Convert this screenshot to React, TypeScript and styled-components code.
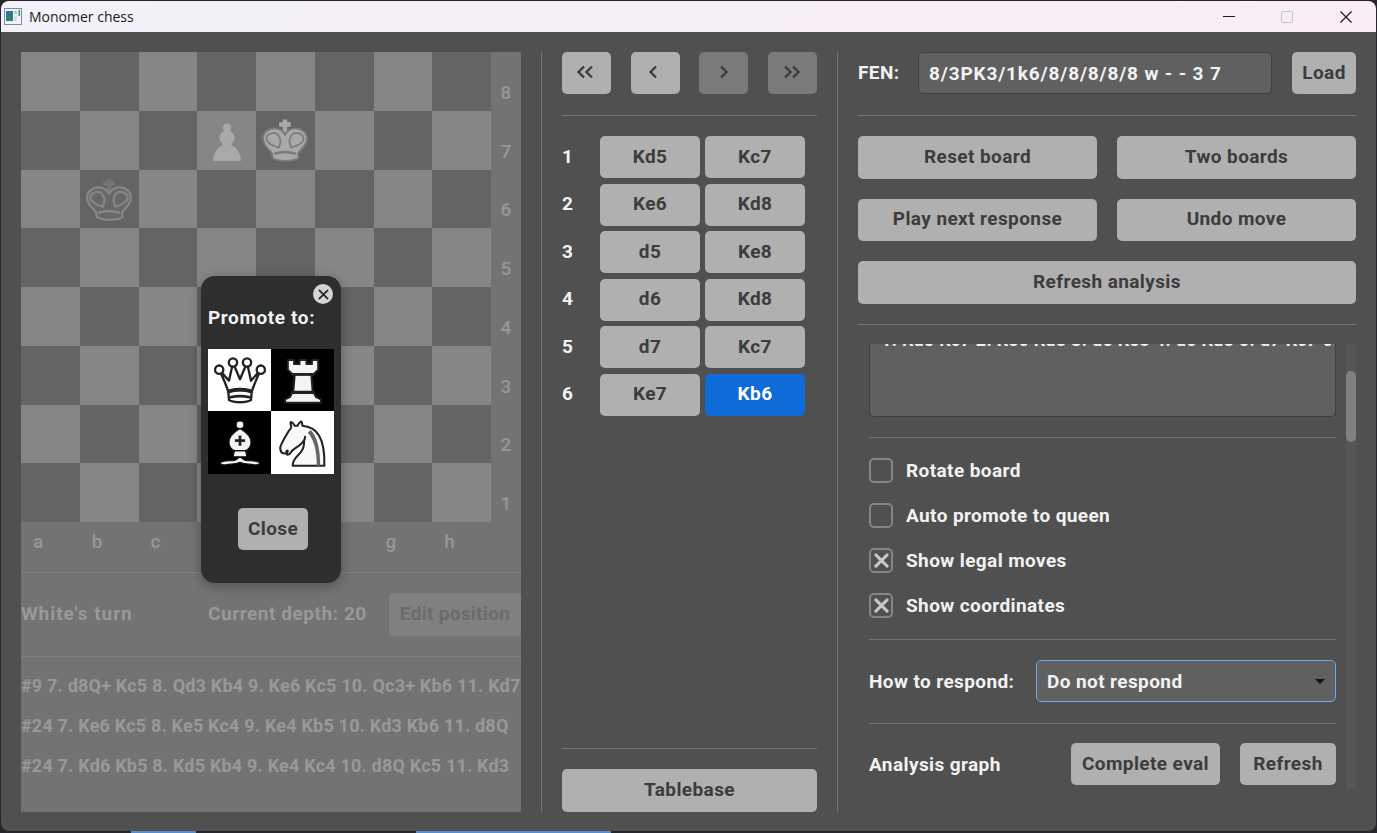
// App.tsx
import { Fragment } from "react";
import styled, { createGlobalStyle } from "styled-components";

const GlobalStyle = createGlobalStyle`
  html, body {
    margin: 0;
    padding: 0;
    width: 100%;
    height: 100%;
    overflow: hidden;
    background: #24252d;
  }
  * {
    box-sizing: border-box;
  }
`;

const FONT = `Roboto, "Noto Sans", sans-serif`;

const Desktop = styled.div`
  width: 1377px;
  height: 833px;
  padding: 1px 1px 0 1px;
  display: flex;
  flex-direction: column;
  background: #24252d;
`;

const Window = styled.div`
  width: 1375px;
  height: 830px;
  display: flex;
  flex-direction: column;
  border-radius: 8px;
  overflow: hidden;
  background: #505050;
`;

const TaskStrip = styled.div`
  height: 2px;
  display: flex;
  padding-left: 130px;
  gap: 220px;
`;

const TaskMark = styled.span<{ $w: number }>`
  width: ${(p) => p.$w}px;
  height: 2px;
  background: #4f8fcf;
`;

const TitleBar = styled.div`
  height: 31px;
  flex: none;
  display: flex;
  align-items: center;
  padding-left: 3px;
  background: linear-gradient(90deg, #f3f1f9, #faedf5);
`;

const TitleText = styled.span`
  margin-left: 7px;
  font: 400 14px "Open Sans", sans-serif;
  color: #1a1a1a;
`;

const WinButtons = styled.div`
  margin-left: auto;
  display: flex;
  align-items: center;
  padding-right: 23px;
  gap: 46px;
`;

const Content = styled.div`
  flex: 1;
  display: flex;
  padding: 20px 20px 19px 20px;
  font-family: ${FONT};
`;

const LeftPane = styled.section`
  position: relative;
  width: 500px;
  display: flex;
  flex-direction: column;
  background: #737373;
`;

const BoardRow = styled.div`
  display: flex;
  height: 470px;
`;

const BoardGrid = styled.div`
  width: 470px;
  height: 470px;
  display: grid;
  grid-template-columns: repeat(8, 1fr);
  grid-template-rows: repeat(8, 1fr);
`;

const Square = styled.div<{ $light: boolean }>`
  display: flex;
  align-items: center;
  justify-content: center;
  background: ${(p) => (p.$light ? "#868686" : "#646464")};
`;

const Ranks = styled.div`
  width: 30px;
  display: grid;
  grid-template-rows: repeat(8, 1fr);
`;

const RankLabel = styled.span`
  display: flex;
  align-items: flex-end;
  justify-content: center;
  padding-bottom: 7px;
  font-size: 19px;
  font-weight: 500;
  color: #979797;
`;

const Files = styled.div`
  height: 50px;
  width: 470px;
  display: grid;
  grid-template-columns: repeat(8, 1fr);
`;

const FileLabel = styled.span`
  padding: 8px 0 0 12px;
  font-size: 19px;
  font-weight: 500;
  color: #979797;
`;

const Rule = styled.div<{ $color?: string }>`
  flex: none;
  height: 1px;
  background: ${(p) => p.$color || "#747474"};
`;

const StatusRow = styled.div`
  display: flex;
  align-items: center;
  height: 83px;
  font-size: 19px;
  font-weight: 700;
  letter-spacing: 0.55px;
  color: #999999;
`;

const TurnText = styled.span`
  width: 187px;
  letter-spacing: 0.95px;
  padding-bottom: 2px;
`;

const DepthText = styled.span`
  flex: 1;
  padding-bottom: 2px;
`;

const FadedButton = styled.div`
  width: 132px;
  height: 43px;
  padding-bottom: 2px;
  display: flex;
  align-items: center;
  justify-content: center;
  border-radius: 4px;
  background: #808080;
  color: #6b6b6b;
  font-size: 19px;
  font-weight: 700;
  letter-spacing: 0.3px;
`;

const Lines = styled.div`
  padding-top: 9px;
`;

const LineText = styled.div`
  height: 40px;
  line-height: 40px;
  white-space: nowrap;
  overflow: hidden;
  font-size: 18px;
  font-weight: 700;
  letter-spacing: 0.2px;
  color: #999999;
`;

const Overlay = styled.div`
  position: absolute;
  inset: 0;
  display: flex;
  align-items: center;
  justify-content: center;
  padding-bottom: 5px;
`;

const Dialog = styled.div`
  position: relative;
  width: 140px;
  height: 307px;
  display: flex;
  flex-direction: column;
  align-items: center;
  border-radius: 14px;
  background: #2e2e2e;
  box-shadow: 0 3px 12px rgba(0, 0, 0, 0.3);
`;

const DialogClose = styled.div`
  position: absolute;
  top: 8px;
  right: 8px;
  width: 20px;
  height: 20px;
  display: flex;
  align-items: center;
  justify-content: center;
  border-radius: 50%;
  background: #d4d4d4;
`;

const DialogTitle = styled.div`
  align-self: flex-start;
  margin: 31px 0 0 7px;
  font-size: 19px;
  line-height: 22px;
  font-weight: 700;
  letter-spacing: 0.6px;
  color: #f2f2f2;
`;

const PromoGrid = styled.div`
  margin-top: 20px;
  display: grid;
  grid-template-columns: 63px 63px;
  grid-template-rows: 62px 63px;
`;

const PromoCell = styled.div<{ $dark?: boolean }>`
  display: flex;
  align-items: center;
  justify-content: center;
  background: ${(p) => (p.$dark ? "#000000" : "#ffffff")};
`;

const Button = styled.div<{ $w?: number; $muted?: boolean; $active?: boolean }>`
  ${(p) => (p.$w ? `width: ${p.$w}px;` : "")}
  height: 42px;
  flex: none;
  padding-bottom: 2px;
  display: flex;
  align-items: center;
  justify-content: center;
  border-radius: 5px;
  font-size: 19px;
  font-weight: 700;
  letter-spacing: 0.4px;
  background: ${(p) => (p.$active ? "#0e6bd8" : p.$muted ? "#7a7a7a" : "#b0b0b0")};
  color: ${(p) => (p.$active ? "#ffffff" : "#3c3c3c")};
`;

const PopupButton = styled(Button)`
  margin: 34px 0 0 4px;
`;

const VSep = styled.div`
  flex: none;
  width: 1px;
  margin: 0 20px;
  background: #747474;
`;

const MiddlePane = styled.section`
  width: 255px;
  display: flex;
  flex-direction: column;
`;

const NavRow = styled.div`
  display: flex;
  justify-content: space-between;
  margin-bottom: 21px;
`;

const MoveList = styled.div`
  flex: 1;
  margin-top: 20px;
  display: grid;
  grid-template-columns: 38px 100px 105px;
  grid-auto-rows: 42px;
  row-gap: 5.5px;
  align-content: start;
`;

const MoveNo = styled.span`
  display: flex;
  align-items: center;
  padding-bottom: 2px;
  font-size: 19px;
  font-weight: 700;
  color: #f2f2f2;
`;

const BlackMove = styled(Button)`
  margin-left: 5px;
`;

const TablebaseButton = styled(Button)`
  margin-top: 20px;
  height: 43px;
`;

const RightPane = styled.section`
  width: 498px;
  display: flex;
  flex-direction: column;
`;

const FenRow = styled.div`
  height: 43px;
  display: flex;
  align-items: flex-start;
  margin-bottom: 20px;
`;

const FenLabel = styled.span`
  width: 60px;
  line-height: 42px;
  font-size: 19px;
  font-weight: 700;
  letter-spacing: 0.4px;
  color: #f2f2f2;
`;

const FenInput = styled.div`
  width: 354px;
  height: 42px;
  margin-right: 20px;
  padding-left: 10px;
  display: flex;
  align-items: center;
  white-space: pre;
  border: 1px solid #3e3e3e;
  border-radius: 5px;
  background: #606060;
  font-size: 19px;
  font-weight: 700;
  letter-spacing: 0.85px;
  color: #f2f2f2;
`;

const ActionGrid = styled.div`
  margin: 20px 0;
  display: grid;
  grid-template-columns: 1fr 1fr;
  grid-auto-rows: 42.5px;
  gap: 20px;
`;

const ActionButton = styled(Button)`
  height: 100%;
`;

const WideButton = styled(ActionButton)`
  grid-column: span 2;
`;

const ScrollArea = styled.div`
  height: 444px;
  margin-top: 19.5px;
  display: flex;
`;

const ScrollBody = styled.div`
  width: 467px;
  margin: 0 10px 0 11px;
  display: flex;
  flex-direction: column;
  overflow: hidden;
`;

const ScrollTrack = styled.div`
  position: relative;
  width: 10px;
  background: #565656;
`;

const ScrollThumb = styled.div`
  position: absolute;
  top: 27px;
  left: 0;
  width: 10px;
  height: 71px;
  border-radius: 5px;
  background: #808080;
`;

const PgnBox = styled.div`
  height: 73px;
  flex: none;
  padding: 0 1px 0 11px;
  overflow: hidden;
  border: 1px solid #3e3e3e;
  border-top: none;
  border-radius: 0 0 5px 5px;
  background: #606060;
`;

const PgnText = styled.div`
  margin-top: -15px;
  white-space: nowrap;
  overflow: hidden;
  font-size: 18px;
  line-height: 22px;
  font-weight: 700;
  letter-spacing: 0.3px;
  color: #f2f2f2;
`;

const PgnRule = styled(Rule)`
  margin-top: 20px;
`;

const Checks = styled.div`
  margin: 20px 0 21px;
  display: flex;
  flex-direction: column;
  gap: 20px;
`;

const CheckRow = styled.div`
  height: 25px;
  display: flex;
  align-items: center;
  font-size: 19px;
  font-weight: 700;
  letter-spacing: 0.4px;
  color: #f2f2f2;
`;

const CheckBox = styled.div`
  width: 24px;
  height: 25px;
  margin-right: 13px;
  display: flex;
  align-items: center;
  justify-content: center;
  border: 2px solid #858585;
  border-radius: 5px;
`;

const RespondRow = styled.div`
  margin: 20px 0 21px;
  display: flex;
  align-items: center;
  justify-content: space-between;
`;

const RowLabel = styled.span`
  font-size: 19px;
  font-weight: 700;
  letter-spacing: 0.4px;
  color: #f2f2f2;
`;

const SelectBox = styled.div`
  width: 300px;
  height: 42px;
  padding: 0 10px;
  display: flex;
  align-items: center;
  justify-content: space-between;
  border: 1px solid #62aef0;
  border-radius: 5px;
  background: #606060;
  font-size: 19px;
  font-weight: 700;
  letter-spacing: 0.4px;
  color: #f2f2f2;
`;

const Caret = styled.span`
  width: 0;
  height: 0;
  border-left: 5px solid transparent;
  border-right: 5px solid transparent;
  border-top: 5px solid #111111;
`;

const GraphRow = styled.div`
  margin-top: 19px;
  display: flex;
  align-items: center;
`;

const GraphLabel = styled(RowLabel)`
  flex: 1;
`;

const GraphGap = styled.div`
  width: 20px;
`;

const PieceSvg = styled.svg<{ $fill: string; $line: string; $weight?: number }>`
  fill: ${(p) => p.$fill};
  stroke: ${(p) => p.$line};
  stroke-width: ${(p) => p.$weight || 1.4};
  stroke-linecap: round;
  stroke-linejoin: round;
  flex: none;
`;

type Tone = { fill: string; line: string; size: number; weight?: number; cross?: string };

const King = ({ fill, line, size, weight, cross }: Tone) => (
  <PieceSvg $fill={fill} $line={line} $weight={weight} width={size} height={size} viewBox="0 0 45 45">
    <path d="M22.5 6.5v10M18 10.500h9" fill="none" strokeWidth={3.4} stroke={cross || fill} strokeLinecap="butt" />
    <path d="M12.500 33C10 29 5.500 27 5.500 21.500 5.500 16.500 10 13.500 14 13.500c4 0 7 2 8.500 5 1.500-3 4.500-5 8.500-5 4 0 8.500 3 8.500 8 0 5.500-4.500 7.500-7 11.500l.5 3.500c-5 3-15 3-20 0z" />
    <path d="M14 17c-3.500 0-6 2-6 4.500 0 3 3.500 5 9.500 7 1.500-3 2-5.500 1-7.500-1-2.500-2.500-4-4.500-4zM31 17c3.500 0 6 2 6 4.500 0 3-3.500 5-9.500 7-1.500-3-2-5.500-1-7.500 1-2.500 2.500-4 4.500-4z" />
    <path d="M15 33c4.500-1.500 10.500-1.500 15 0" fill="none" strokeWidth={2} />
  </PieceSvg>
);

const Pawn = ({ fill, line, size }: Tone) => (
  <PieceSvg $fill={fill} $line={line} width={size} height={size} viewBox="0 0 45 45">
    <path d="M22.5 9c-2.21 0-4 1.79-4 4 0 .89.29 1.71.78 2.38C17.33 16.5 16 18.59 16 21c0 2.03.94 3.84 2.41 5.03-3 1.06-7.41 5.55-7.41 13.47h23c0-7.92-4.41-12.41-7.41-13.47 1.47-1.19 2.41-3 2.41-5.03 0-2.41-1.33-4.5-3.28-5.62.49-.67.78-1.49.78-2.38 0-2.21-1.79-4-4-4z" />
  </PieceSvg>
);

const Queen = ({ size }: { size: number }) => (
  <PieceSvg $fill="#ffffff" $line="#222222" $weight={1.7} width={size} height={size} viewBox="0 0 45 45">
    <path d="M14 31C12.500 26 10.500 22 7.500 15l7 8L17.400 10 22.500 22 27.600 10l2.900 13 7-8C34.500 22 32.500 26 31 31c-5.500-1.500-11.500-1.500-17 0z" />
    <circle cx="7.400" cy="15" r="3" />
    <circle cx="17.400" cy="9.800" r="3" />
    <circle cx="27.600" cy="9.800" r="3" />
    <circle cx="37.600" cy="15" r="3" />
    <path d="M14 31c5.500-1.500 11.500-1.500 17 0l-.5 6c-3.500 2.200-12.500 2.200-16 0z" />
    <path d="M15 30.500c4.500-1.200 10.500-1.200 15 0" fill="none" strokeWidth={2.800} />
    <path d="M15.500 35c4.500-1 9.500-1 14 0" fill="none" strokeWidth={2} />
  </PieceSvg>
);

const Rook = ({ size }: { size: number }) => (
  <PieceSvg $fill="#f4f4f4" $line="#222222" width={size} height={size} viewBox="0 0 45 45">
    <path d="M11.500 8h4.500v3h4V8h5v3h4V8h4.500v7l-3.500 3.500h-15L11.500 15z" />
    <path d="M16.500 18.500h12l1 12.500h-14z" />
    <path d="M14.500 32h16l1.500 3 3.500 1.500V39H9.500v-2.500L13 35z" />
    <path d="M15.500 18.500h14M14.500 31.500h16" fill="none" strokeWidth={2} />
  </PieceSvg>
);

const Bishop = ({ size }: { size: number }) => (
  <PieceSvg $fill="#f4f4f4" $line="#111111" $weight={0.8} width={size} height={size} viewBox="0 0 45 45">
    <path d="M8 37c3-2.500 8-1 11-2 1.500-.5 2.500-1.500 3.500-3 1 1.500 2 2.500 3.500 3 3 1 8-.5 11 2-1 2-3 1.500-5 1.200-3-.5-7-.5-9.500-1.700-2.500 1.200-6.500 1.200-9.500 1.700-2 .3-4 .8-5-1.200z" />
    <path d="M18.500 28h8l1 4.500h-10z" />
    <path d="M22.500 12c-5 3-8 6-8 10 0 3.500 2.500 5.500 4 6h8c1.500-.5 4-2.500 4-6 0-4-3-7-8-10z" />
    <circle cx="22.500" cy="9.300" r="2.800" />
    <path d="M22.500 17v7.500M18.800 20.700h7.400" fill="none" stroke="#222222" strokeWidth={2} strokeLinecap="butt" />
  </PieceSvg>
);

const Knight = ({ size }: { size: number }) => (
  <PieceSvg $fill="#f8f8f8" $line="#222222" $weight={1.5} width={size} height={size} viewBox="0 0 45 45">
    <path d="M22 10c10.500 1 16.500 8 16 29H15c0-9 10-6.500 8-21" />
    <path d="M28 13c5 5 7 14 7 26h-2.500c0-11-2-19-6.500-24z" fill="#666666" stroke="none" />
    <path d="M24 18c.38 2.910-5.550 7.370-8 9-3 2-2.820 4.340-5 4-1.042-.94 1.410-3.040 0-3-1 0 .19 1.230-1 2-1 0-4.003 1-4-4 0-2 6-12 6-12s1.890-1.900 2-3.500c-.73-.994-.5-2-.5-3 1-1 3 2.500 3 2.500h2s.78-1.992 2.500-3c1 0 1 3 1 3" />
  </PieceSvg>
);

const CloseX = ({ size, color, width }: { size: number; color: string; width: number }) => (
  <svg width={size} height={size} viewBox="0 0 12 12" fill="none" stroke={color} strokeWidth={width} strokeLinecap="round">
    <path d="M1.500 1.500l9 9M10.500 1.500l-9 9" />
  </svg>
);

const Chevrons = ({ dir, count }: { dir: "left" | "right"; count: number }) => {
  const offs = count === 2 ? [0, 8] : [4];
  return (
    <svg width="20" height="14" viewBox="0 0 20 14" fill="none" stroke="#3c3c3c" strokeWidth="2.400">
      {offs.map((o) =>
        dir === "left" ? (
          <path key={o} d={`M${o + 7} 1.500L${o + 1.500} 7l${5.500} 5.500`} />
        ) : (
          <path key={o} d={`M${o + 3} 1.500L${o + 8.500} 7L${o + 3} 12.500`} />
        )
      )}
    </svg>
  );
};

const AppIcon = () => (
  <svg width="18" height="18" viewBox="0 0 18 18">
    <rect x="0.500" y="0.500" width="17" height="16" fill="#f2f4f4" stroke="#7d8b92" />
    <rect x="2" y="3" width="7" height="10" fill="#2f7d83" />
    <rect x="2" y="3" width="7" height="3" fill="#3a6da8" />
    <rect x="10" y="3" width="3" height="3" fill="#b9c7cb" />
    <rect x="10" y="8" width="3" height="5" fill="#d4dbde" />
    <rect x="14.500" y="2" width="1.500" height="6" fill="#2f8f8f" />
  </svg>
);

const RANKS = ["8", "7", "6", "5", "4", "3", "2", "1"];
const FILES = ["a", "b", "c", "d", "e", "f", "g", "h"];
// d, e and f sit under the promotion dialog
const FILE_LABELS = ["a", "b", "c", "", "", "", "g", "h"];

const LINES = [
  "#9 7. d8Q+ Kc5 8. Qd3 Kb4 9. Ke6 Kc5 10. Qc3+ Kb6 11. Kd7",
  "#24 7. Ke6 Kc5 8. Ke5 Kc4 9. Ke4 Kb5 10. Kd3 Kb6 11. d8Q",
  "#24 7. Kd6 Kb5 8. Kd5 Kb4 9. Ke4 Kc4 10. d8Q Kc5 11. Kd3",
];

const MOVES: [string, string][] = [
  ["Kd5", "Kc7"],
  ["Ke6", "Kd8"],
  ["d5", "Ke8"],
  ["d6", "Kd8"],
  ["d7", "Kc7"],
  ["Ke7", "Kb6"],
];

const pieceAt = (row: number, col: number) => {
  if (row === 1 && col === 3) return <Pawn fill="#a9a9a9" line="#868686" size={58} />;
  if (row === 1 && col === 4) return <King fill="#a9a9a9" line="#7b7b7b" size={58} />;
  if (row === 2 && col === 1) return <King fill="#686868" line="#868686" size={58} weight={1.800} cross="#747474" />;
  return null;
};

const App = () => {
  return (
    <Desktop>
      <GlobalStyle />
      <Window>
        <TitleBar>
          <AppIcon />
          <TitleText>Monomer chess</TitleText>
          <WinButtons>
            <svg width="12" height="12" viewBox="0 0 12 12">
              <path d="M0 5.500h12" stroke="#1a1a1a" strokeWidth="1" />
            </svg>
            <svg width="12" height="12" viewBox="0 0 12 12">
              <rect x="0.500" y="0.500" width="11" height="11" rx="1.500" fill="none" stroke="#c4c2c8" />
            </svg>
            <CloseX size={14} color="#1a1a1a" width={1} />
          </WinButtons>
        </TitleBar>
        <Content>
          <LeftPane>
            <BoardRow>
              <BoardGrid>
                {RANKS.map((r, row) =>
                  FILES.map((f, col) => (
                    <Square key={f + r} $light={(row + col) % 2 === 0}>
                      {pieceAt(row, col)}
                    </Square>
                  ))
                )}
              </BoardGrid>
              <Ranks>
                {RANKS.map((r) => (
                  <RankLabel key={r}>{r}</RankLabel>
                ))}
              </Ranks>
            </BoardRow>
            <Files>
              {FILE_LABELS.map((f, i) => (
                <FileLabel key={i}>{f}</FileLabel>
              ))}
            </Files>
            <Rule $color="#808080" />
            <StatusRow>
              <TurnText>White's turn</TurnText>
              <DepthText>Current depth: 20</DepthText>
              <FadedButton>Edit position</FadedButton>
            </StatusRow>
            <Rule $color="#808080" />
            <Lines>
              {LINES.map((l) => (
                <LineText key={l}>{l}</LineText>
              ))}
            </Lines>
            <Overlay>
              <Dialog>
                <DialogClose>
                  <CloseX size={11} color="#222222" width={1.800} />
                </DialogClose>
                <DialogTitle>Promote to:</DialogTitle>
                <PromoGrid>
                  <PromoCell>
                    <Queen size={62} />
                  </PromoCell>
                  <PromoCell $dark>
                    <Rook size={62} />
                  </PromoCell>
                  <PromoCell $dark>
                    <Bishop size={62} />
                  </PromoCell>
                  <PromoCell>
                    <Knight size={62} />
                  </PromoCell>
                </PromoGrid>
                <PopupButton $w={70}>Close</PopupButton>
              </Dialog>
            </Overlay>
          </LeftPane>
          <VSep />
          <MiddlePane>
            <NavRow>
              <Button $w={49}>
                <Chevrons dir="left" count={2} />
              </Button>
              <Button $w={49}>
                <Chevrons dir="left" count={1} />
              </Button>
              <Button $w={49} $muted>
                <Chevrons dir="right" count={1} />
              </Button>
              <Button $w={49} $muted>
                <Chevrons dir="right" count={2} />
              </Button>
            </NavRow>
            <Rule />
            <MoveList>
              {MOVES.map(([w, b], i) => (
                <Fragment key={i}>
                  <MoveNo>{i + 1}</MoveNo>
                  <Button>{w}</Button>
                  <BlackMove $active={i === 5}>{b}</BlackMove>
                </Fragment>
              ))}
            </MoveList>
            <Rule />
            <TablebaseButton>Tablebase</TablebaseButton>
          </MiddlePane>
          <VSep />
          <RightPane>
            <FenRow>
              <FenLabel>FEN:</FenLabel>
              <FenInput>8/3PK3/1k6/8/8/8/8/8 w - - 3 7</FenInput>
              <Button $w={64}>Load</Button>
            </FenRow>
            <Rule />
            <ActionGrid>
              <ActionButton>Reset board</ActionButton>
              <ActionButton>Two boards</ActionButton>
              <ActionButton>Play next response</ActionButton>
              <ActionButton>Undo move</ActionButton>
              <WideButton>Refresh analysis</WideButton>
            </ActionGrid>
            <Rule />
            <ScrollArea>
              <ScrollBody>
                <PgnBox>
                  <PgnText>1. Kd5 Kc7 2. Ke6 Kd8 3. d5 Ke8 4. d6 Kd8 5. d7 Kc7 6. Ke7 Kb6</PgnText>
                </PgnBox>
                <PgnRule />
                <Checks>
                  <CheckRow>
                    <CheckBox />
                    Rotate board
                  </CheckRow>
                  <CheckRow>
                    <CheckBox />
                    Auto promote to queen
                  </CheckRow>
                  <CheckRow>
                    <CheckBox>
                      <CloseX size={15} color="#c8c8c8" width={2.400} />
                    </CheckBox>
                    Show legal moves
                  </CheckRow>
                  <CheckRow>
                    <CheckBox>
                      <CloseX size={15} color="#c8c8c8" width={2.400} />
                    </CheckBox>
                    Show coordinates
                  </CheckRow>
                </Checks>
                <Rule />
                <RespondRow>
                  <RowLabel>How to respond:</RowLabel>
                  <SelectBox>
                    Do not respond
                    <Caret />
                  </SelectBox>
                </RespondRow>
                <Rule />
                <GraphRow>
                  <GraphLabel>Analysis graph</GraphLabel>
                  <Button $w={149}>Complete eval</Button>
                  <GraphGap />
                  <Button $w={96}>Refresh</Button>
                </GraphRow>
              </ScrollBody>
              <ScrollTrack>
                <ScrollThumb />
              </ScrollTrack>
            </ScrollArea>
          </RightPane>
        </Content>
      </Window>
      <TaskStrip>
        <TaskMark $w={65} />
        <TaskMark $w={195} />
      </TaskStrip>
    </Desktop>
  );
};

export default App;
